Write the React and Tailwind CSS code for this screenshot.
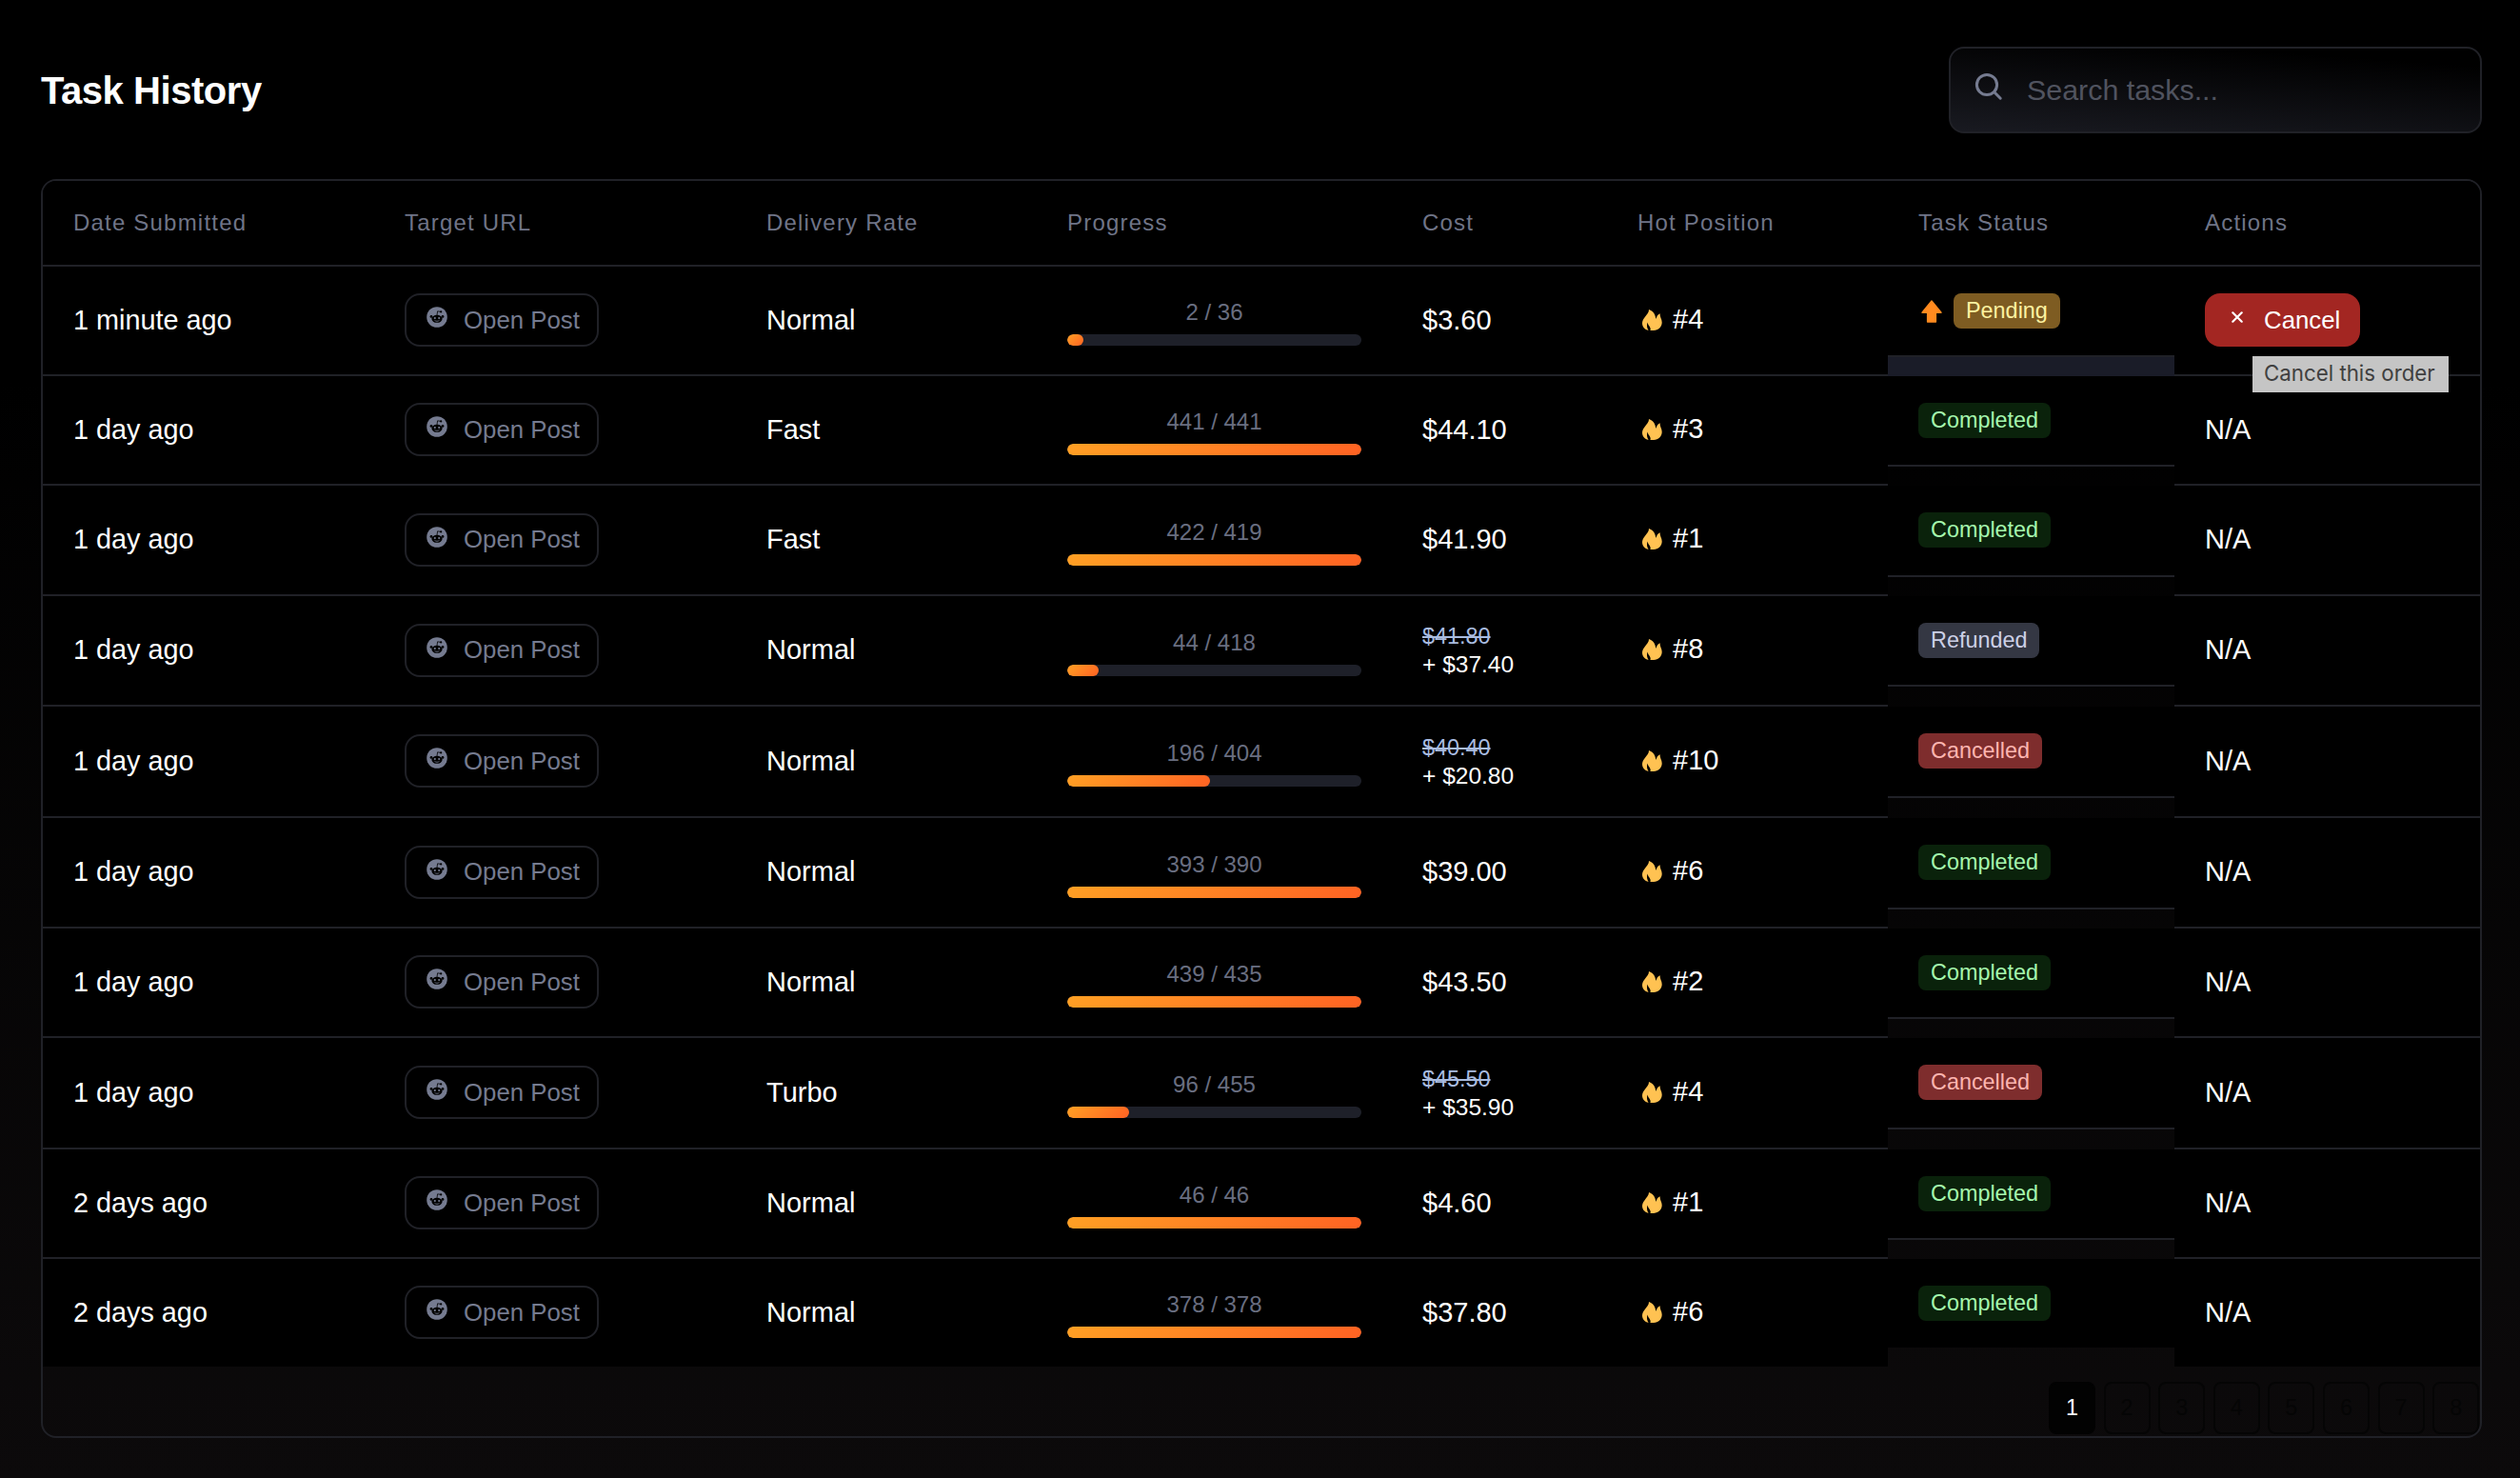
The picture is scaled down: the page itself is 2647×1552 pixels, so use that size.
import React from 'react';

const COLUMNS = ['Date Submitted', 'Target URL', 'Delivery Rate', 'Progress', 'Cost', 'Hot Position', 'Task Status', 'Actions'];

const GRID = 'grid grid-cols-[348px_380px_316px_373px_226px_295px_301px_321px]';
const cellCls = 'flex items-center bg-black px-8 border-[#202127]';

const STATUS_BADGE = {
  Pending: 'bg-[#7e5c22] text-[#fdf2a0]',
  Completed: 'bg-[#0a220b] text-[#a5f7ad]',
  Refunded: 'bg-[#343743] text-[#ccd0e6]',
  Cancelled: 'bg-[#7e2d2d] text-[#fdb5b0]',
};

const TASKS = [
  { id: 1, date: '1 minute ago', rate: 'Normal', done: 2, total: 36, cost: '$3.60', hot: 4, status: 'Pending', h: 'h-[115px]' },
  { id: 2, date: '1 day ago', rate: 'Fast', done: 441, total: 441, cost: '$44.10', hot: 3, status: 'Completed', h: 'h-[115px]' },
  { id: 3, date: '1 day ago', rate: 'Fast', done: 422, total: 419, cost: '$41.90', hot: 1, status: 'Completed', h: 'h-[116px]' },
  { id: 4, date: '1 day ago', rate: 'Normal', done: 44, total: 418, cost: '$41.80', refund: '$37.40', hot: 8, status: 'Refunded', h: 'h-[116px]' },
  { id: 5, date: '1 day ago', rate: 'Normal', done: 196, total: 404, cost: '$40.40', refund: '$20.80', hot: 10, status: 'Cancelled', h: 'h-[117px]' },
  { id: 6, date: '1 day ago', rate: 'Normal', done: 393, total: 390, cost: '$39.00', hot: 6, status: 'Completed', h: 'h-[116px]' },
  { id: 7, date: '1 day ago', rate: 'Normal', done: 439, total: 435, cost: '$43.50', hot: 2, status: 'Completed', h: 'h-[115px]' },
  { id: 8, date: '1 day ago', rate: 'Turbo', done: 96, total: 455, cost: '$45.50', refund: '$35.90', hot: 4, status: 'Cancelled', h: 'h-[117px]' },
  { id: 9, date: '2 days ago', rate: 'Normal', done: 46, total: 46, cost: '$4.60', hot: 1, status: 'Completed', h: 'h-[115px]' },
  { id: 10, date: '2 days ago', rate: 'Normal', done: 378, total: 378, cost: '$37.80', hot: 6, status: 'Completed', h: 'h-[113px]' },
];

const PAGES = [1, 2, 3, 4, 5, 6, 7, 8];

function SearchIcon() {
  return (
    <svg className="size-[30px] shrink-0" viewBox="0 0 30 30" fill="none" stroke="#757b90" strokeWidth="3" strokeLinecap="round">
      <circle cx="13" cy="13" r="10.6" />
      <path d="M20.8 20.8L27.2 27.2" />
    </svg>
  );
}

function RedditIcon() {
  return (
    <svg className="mb-1.5 size-[22px] shrink-0" viewBox="0 0 22 22">
      <circle cx="11" cy="11" r="10.8" fill="#757b90" />
      <g fill="#000">
        <ellipse cx="11" cy="12.8" rx="5.6" ry="4" />
        <circle cx="5" cy="10.4" r="1.4" />
        <circle cx="17" cy="10.4" r="1.4" />
        <circle cx="15.2" cy="5.4" r="1.1" />
      </g>
      <path d="M11 9L11.6 4.8L15 5.4" fill="none" stroke="#000" strokeWidth="0.8" />
      <circle cx="8.8" cy="12" r="1.1" fill="#757b90" />
      <circle cx="13.2" cy="12" r="1.1" fill="#757b90" />
      <path d="M8.8 14.6C10 15.6 12 15.6 13.2 14.6" fill="none" stroke="#757b90" strokeWidth="0.8" strokeLinecap="round" />
    </svg>
  );
}

function FlameIcon() {
  return (
    <svg className="h-[22px] w-[21px] shrink-0" viewBox="0 0 21 22">
      <path fill="#ffc252" d="M7 0C7.2 3 4.6 5.6 2.4 8.4C.8 10.5 0 12.3 0 14.4C0 18 2.6 20.9 6.6 21.9C4.9 19.6 4.6 16.6 5.5 13.6C6.1 16.4 7.6 17.4 8.4 19.2C8.8 20.2 8.8 21.2 8.4 22H12C17 21.6 20.7 18.2 20.7 13.4C20.7 10 18.4 8 18.6 4.2C16.2 5.4 15 7.4 14.6 9.8C14 9 14 8 13.5 6.4C12.4 3 9.8 1 7 0Z" />
    </svg>
  );
}

function UpvoteIcon() {
  return (
    <svg className="h-6 w-[22px] shrink-0" viewBox="0 0 22 24">
      <path fill="#ff8a1f" stroke="#ff8a1f" strokeWidth="1.4" strokeLinejoin="round" d="M11 1L21 13.2H15.4V23H6.6V13.2H1Z" />
    </svg>
  );
}

function CloseIcon() {
  return (
    <svg className="size-3 shrink-0" viewBox="0 0 12 12" fill="none" stroke="#fff" strokeWidth="2.2" strokeLinecap="round">
      <path d="M1.3 1.3L10.7 10.7M10.7 1.3L1.3 10.7" />
    </svg>
  );
}

function ProgressBar({ done, total }) {
  const pct = Math.min(100, (done / total) * 100);
  return (
    <div className="mb-px w-full">
      <div className="mb-1.5 h-9 text-center text-2xl leading-[37px] text-[#696e80]">{done} / {total}</div>
      <div className="h-3 overflow-hidden rounded-full bg-[#1e2029]">
        <div className="h-full rounded-full bg-[linear-gradient(135deg,#ffa024,#ff6223)]" style={{ width: `${pct}%` }} />
      </div>
    </div>
  );
}

function Cost({ task }) {
  if (!task.refund) return <span>{task.cost}</span>;
  return (
    <div className="whitespace-nowrap leading-[29px]">
      <div className="text-[23.4px] text-[#a9bce0] line-through">{task.cost}</div>
      <div className="text-[24.5px]">+ {task.refund}</div>
    </div>
  );
}

function CancelButton() {
  return (
    <div className="relative mb-px">
      <button className="flex h-14 w-[163px] items-center rounded-2xl bg-[#a32622] pl-7 text-[25.8px] text-white">
        <span className="mb-1.5"><CloseIcon /></span>
        <span className="ml-[22px]">Cancel</span>
      </button>
      <div className="absolute top-[66px] left-[50px] z-10 h-[38px] w-[206px] bg-[#c5c5c5] pl-3 font-['Inter',sans-serif] text-[22.3px] leading-9 whitespace-nowrap text-[#404040]">
        Cancel this order
      </div>
    </div>
  );
}

function TaskRow({ task, last }) {
  const border = last ? '' : 'border-b-2';
  return (
    <div className={`${GRID} ${task.h} text-[29px] text-white ${task.id === 1 ? 'bg-[#1a1c28]' : ''}`}>
      <div className={`${cellCls} ${border} text-[28.8px]`}>{task.date}</div>
      <div className={`${cellCls} ${border}`}>
        <button className="mb-px flex h-14 w-[204px] items-center rounded-2xl border-2 border-[#202127] pl-[21px] text-[25.8px] text-[#757b8f]">
          <RedditIcon />
          <span className="ml-[17px]">Open Post</span>
        </button>
      </div>
      <div className={`${cellCls} ${border}`}>{task.rate}</div>
      <div className={`${cellCls} ${border}`}><ProgressBar done={task.done} total={task.total} /></div>
      <div className={`${cellCls} ${border}`}><Cost task={task} /></div>
      <div className={`${cellCls} ${border} pb-0.5`}>
        <span className="ml-[5px]"><FlameIcon /></span>
        <span className="ml-[11px]">#{task.hot}</span>
      </div>
      {/* status cell stops short of the row's bottom edge */}
      <div className={`flex flex-col ${task.refund ? 'pb-[21px]' : 'pb-5'}`}>
        <div className={`flex flex-1 items-start border-[#202127] bg-black px-8 pt-7 ${border}`}>
          {task.status === 'Pending' && <span className="mt-[7px] mr-3 ml-[3px]"><UpvoteIcon /></span>}
          <span className={`h-[37px] rounded-lg px-[13px] text-[23.4px] leading-[37px] ${STATUS_BADGE[task.status]}`}>{task.status}</span>
        </div>
      </div>
      <div className={`${cellCls} ${border}`}>{task.status === 'Pending' ? <CancelButton /> : 'N/A'}</div>
    </div>
  );
}

export default function App() {
  return (
    <div className="h-[1552px] w-[2647px] overflow-hidden bg-[linear-gradient(to_bottom,#000_400px,#0c0a0b)] pt-[49px] pr-10 pl-[43px] font-['Liberation_Sans',Arial,sans-serif]">
      <div className="flex h-[91px] items-center justify-between">
        <h1 className="text-[40px] font-bold tracking-[-0.45px] text-white">Task History</h1>
        <div className="flex h-[91px] w-[560px] items-center rounded-2xl border-2 border-[#202127] bg-[linear-gradient(4deg,#191a21,#000_85%)] pl-[25px]">
          <span className="mb-2"><SearchIcon /></span>
          <input className="ml-[25px] w-96 bg-transparent text-[30.4px] outline-none placeholder:text-[#50535f]" placeholder="Search tasks..." />
        </div>
      </div>

      <div className="mt-12 h-[1322px] overflow-hidden rounded-2xl border-2 border-[#202127]">
        <div className={`${GRID} h-[90px] text-2xl tracking-[1.2px] text-[#6f7487]`}>
          {COLUMNS.map(label => (
            <div key={label} className={`${cellCls} border-b-2`}>{label}</div>
          ))}
        </div>

        {TASKS.map((task, i) => <TaskRow key={task.id} task={task} last={i === TASKS.length - 1} />)}

        <div className="flex gap-[8.6px] pt-4 pl-[2107px]">
          {PAGES.map(p => (
            <button key={p} className={`h-[55px] w-[49px] shrink-0 rounded-lg border-2 text-[23.4px] ${p === 1 ? 'border-[#020202] bg-[#020202] text-white' : 'border-[#050505] text-[#050505]'}`}>{p}</button>
          ))}
        </div>
      </div>
    </div>
  );
}
